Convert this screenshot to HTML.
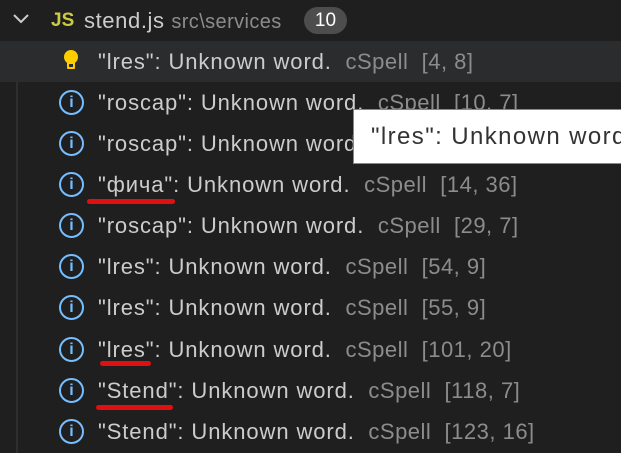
<html><head><style>
body{margin:0;width:621px;height:453px;background:#1f1f1f;overflow:hidden;font-family:"Liberation Sans",sans-serif;position:relative}
.r{position:absolute;left:0;width:621px;height:41px;line-height:41px;font-size:22px;letter-spacing:0.9px;color:#cccccc;white-space:nowrap}
.t{position:absolute;left:98px}
.s{color:#8c8c8c;letter-spacing:0.5px}
.ic{position:absolute;left:59px;top:8px;width:21px;height:21px;border:2px solid #75beff;border-radius:50%;color:#75beff;font-size:16px;line-height:21px;text-align:center;font-weight:bold;letter-spacing:0}
.u{position:absolute;height:5px;background:#e01010;border-radius:3px}
</style></head><body>
<div style="position:absolute;left:16px;top:41px;width:2px;height:412px;background:#2e2e2e"></div>
<div class="r" style="top:0;height:41px">
<svg style="position:absolute;left:12px;top:13px" width="18" height="12"><path d="M2 2 L9 9 L16 2" stroke="#ccc" stroke-width="2" fill="none"/></svg>
<span style="position:absolute;left:51px;color:#cbcb41;font-weight:bold;font-size:19px;letter-spacing:0">JS</span>
<span style="position:absolute;left:84px;letter-spacing:0.6px">stend.js <span class="s" style="font-size:20px;letter-spacing:0.4px">src\services</span></span>
<span style="position:absolute;left:304px;top:7px;width:43px;height:27px;line-height:27px;border-radius:14px;background:#4d4d4d;text-align:center;font-size:19px;color:#fff;letter-spacing:0">10</span>
</div>
<div class="r" style="top:41px;background:#2a2c2d">
<svg style="position:absolute;left:63px;top:8px" width="16" height="24"><circle cx="8" cy="8" r="7" fill="#ffcc00"/><rect x="4" y="11" width="8" height="9" rx="1" fill="#ffcc00"/><rect x="6" y="15" width="4" height="3" fill="#2a2c2d"/></svg>
<span class="t">"lres": Unknown word. <span class="s">&nbsp;cSpell &nbsp;[4, 8]</span></span></div>
<div class="r" style="top:82px"><span class="ic">i</span><span class="t">"roscap": Unknown word. <span class="s">&nbsp;cSpell &nbsp;[10, 7]</span></span></div>
<div class="r" style="top:123px"><span class="ic">i</span><span class="t">"roscap": Unknown word. <span class="s">&nbsp;cSpell &nbsp;[12, 7]</span></span></div>
<div class="r" style="top:164px"><span class="ic">i</span><span class="t">"фича": Unknown word. <span class="s">&nbsp;cSpell &nbsp;[14, 36]</span></span></div>
<div class="r" style="top:205px"><span class="ic">i</span><span class="t">"roscap": Unknown word. <span class="s">&nbsp;cSpell &nbsp;[29, 7]</span></span></div>
<div class="r" style="top:246px"><span class="ic">i</span><span class="t">"lres": Unknown word. <span class="s">&nbsp;cSpell &nbsp;[54, 9]</span></span></div>
<div class="r" style="top:287px"><span class="ic">i</span><span class="t">"lres": Unknown word. <span class="s">&nbsp;cSpell &nbsp;[55, 9]</span></span></div>
<div class="r" style="top:329px"><span class="ic">i</span><span class="t">"lres": Unknown word. <span class="s">&nbsp;cSpell &nbsp;[101, 20]</span></span></div>
<div class="r" style="top:370px"><span class="ic">i</span><span class="t">"Stend": Unknown word. <span class="s">&nbsp;cSpell &nbsp;[118, 7]</span></span></div>
<div class="r" style="top:411px"><span class="ic">i</span><span class="t">"Stend": Unknown word. <span class="s">&nbsp;cSpell &nbsp;[123, 16]</span></span></div>
<div class="u" style="left:87px;top:199px;width:88px"></div>
<div class="u" style="left:100px;top:361px;width:51px"></div>
<div class="u" style="left:96px;top:405px;width:77px"></div>
<div style="position:absolute;left:353px;top:109px;width:270px;height:55px;background:#fff;border:1px solid #888;box-sizing:border-box;font-size:24px;letter-spacing:1.4px;line-height:53px;padding-left:17px;color:#333;white-space:nowrap;overflow:hidden">"lres": Unknown word</div>
</body></html>
